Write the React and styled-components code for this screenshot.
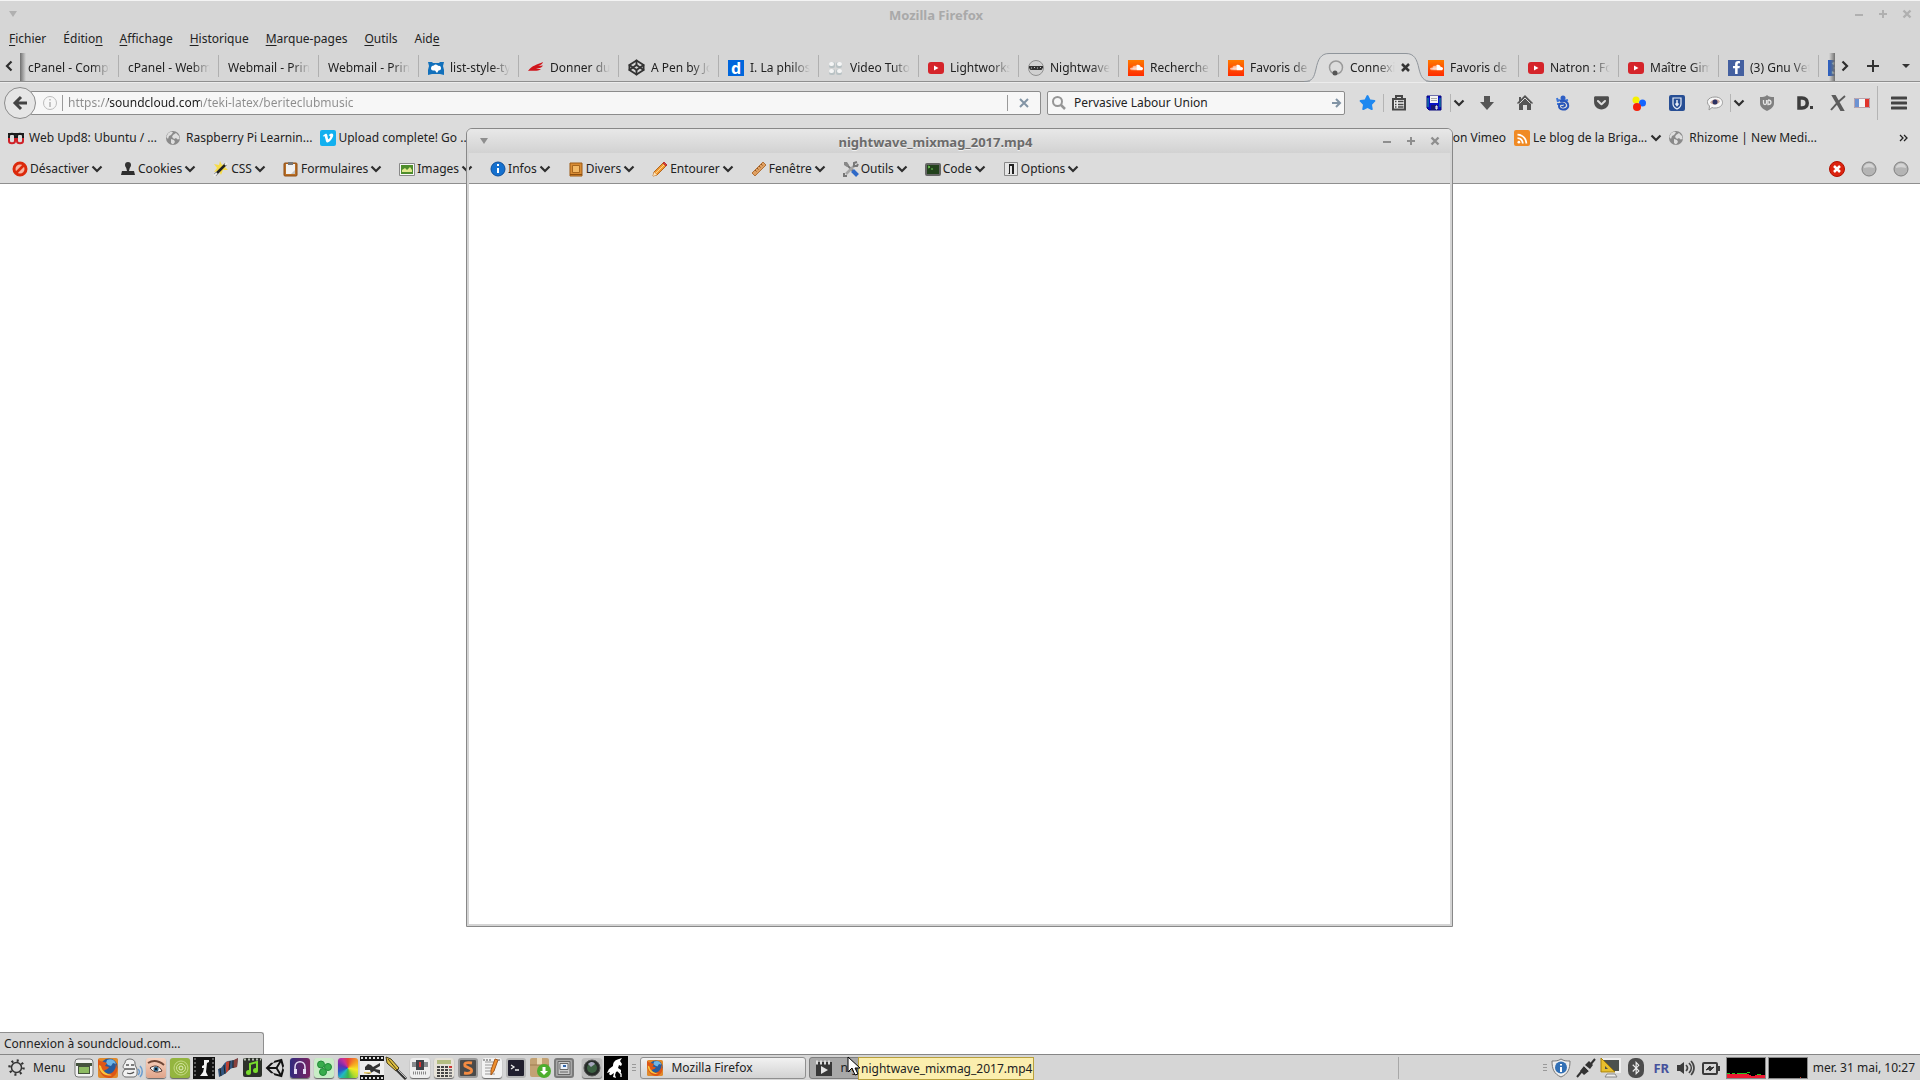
import React from "react";
import styled, { createGlobalStyle } from "styled-components";
import {
  FaBluetoothB,
  FaFacebookF,
  FaGetPocket,
  FaSoundcloud,
  FaStar,
  FaUnity,
  FaVimeoV,
} from "react-icons/fa";
import { MdRssFeed } from "react-icons/md";
import { Codepen } from "lucide-react";

const GlobalStyle = createGlobalStyle`
  * {
    box-sizing: border-box;
  }

  body {
    margin: 0;
    background: #fff;
    color: #222;
    font-family: "Noto Sans", "Open Sans", sans-serif;
    font-size: 12px;
    line-height: 16px;
    overflow: hidden;
  }

  button,
  input {
    font: inherit;
    color: inherit;
    padding: 0;
    margin: 0;
    border: 0;
    background: none;
    outline: none;
    white-space: nowrap;
  }

  svg {
    display: block;
    flex: none;
  }
`;

/* ---------- layout ---------- */

const Desktop = styled.div`
  display: flex;
  flex-direction: column;
  height: 100vh;
  min-width: 1200px;
  overflow: hidden;
`;

const Chrome = styled.header`
  background: #d6d6d6;
  border-top: 1px solid #f4f4f4;
`;

const TitleBar = styled.div`
  display: flex;
  align-items: center;
  height: ${(p) => (p.$floating ? "24px" : "26px")};
  padding: ${(p) => (p.$floating ? "0 5px 0 5px" : "0 1px 0 1px")};
  color: ${(p) => (p.$floating ? "#6b6b6b" : "#a9a9a9")};
  background: ${(p) => (p.$floating ? "linear-gradient(#e8e8e8, #d2d2d2)" : "none")};
  border-radius: 5px 5px 0 0;
  text-shadow: ${(p) => (p.$floating ? "0 1px 0 #f0f0f0" : "none")};
`;

const Title = styled.h1`
  flex: 1;
  margin: 0;
  padding-top: 2px;
  font-size: 13px;
  font-weight: 700;
  text-align: center;
`;

const WindowButton = styled.button`
  display: flex;
  align-items: center;
  justify-content: center;
  width: 24px;
  height: 24px;
  color: ${(p) => (p.$floating ? "#8e8e8e" : "#b0b0b0")};
`;

const MenuBar = styled.nav`
  display: flex;
  align-items: center;
  gap: 17px;
  height: 24px;
  padding-left: 9px;

  u {
    text-underline-offset: 2px;
  }
`;

const TabBar = styled.div`
  display: flex;
  height: 31px;
  border-bottom: 1px solid #8f8f8f;
`;

const TabScroll = styled.button`
  display: flex;
  align-items: center;
  justify-content: center;
  width: ${(p) => p.$width}px;
`;

const TabStrip = styled.div`
  display: flex;
  flex: 1;
  min-width: 0;
  height: 31px;
  position: relative;
  overflow: hidden;

  &::before,
  &::after {
    content: "";
    position: absolute;
    z-index: 1;
    top: 2px;
    bottom: 1px;
    left: 2px;
    width: 6px;
    background: linear-gradient(90deg, #707070, transparent);
  }

  &::after {
    left: auto;
    right: 0;
    background: linear-gradient(270deg, #707070, transparent);
  }
`;

const TabButton = styled.button`
  display: flex;
  align-items: center;
  gap: 6px;
  flex: none;
  width: 100px;
  height: 31px;
  padding: 2px 8px 0 10px;
  position: relative;
  text-align: left;

  &::after {
    content: "";
    display: ${(p) => (p.$plain ? "none" : "block")};
    position: absolute;
    right: -1px;
    top: 4px;
    width: 1px;
    height: 22px;
    background: #b0b0b0;
  }
`;

const TabIcon = styled.span`
  flex: none;
  position: relative;
`;

const TabLabel = styled.span`
  flex: 1;
  min-width: 0;
  overflow: hidden;
  position: relative;
  mask-image: linear-gradient(90deg, #000 calc(100% - 18px), transparent);
`;

const TabShape = styled.svg`
  position: absolute;
  left: -14px;
  top: 0;
`;

const NavBar = styled.div`
  display: flex;
  align-items: center;
  height: 40px;
  padding-left: 4px;
  background: #dcdcdc;
  border-top: 1px solid #ececec;
`;

const BackButton = styled.button`
  display: flex;
  align-items: center;
  justify-content: center;
  flex: none;
  width: 32px;
  height: 32px;
  border: 1px solid #8c8c8c;
  border-radius: 50%;
  background: #e6e6e6;
  position: relative;
  z-index: 1;
`;

const Field = styled.label`
  display: flex;
  align-items: center;
  flex: ${(p) => (p.$search ? "none" : "1")};
  width: ${(p) => (p.$search ? "298px" : "auto")};
  height: 24px;
  margin-left: ${(p) => (p.$search ? "6px" : "-6px")};
  padding: ${(p) => (p.$search ? "0 2px 0 4px" : "0 0 0 12px")};
  border: 1px solid #8c8c8c;
  border-radius: 2px;
  background: #f7f7f7;
`;

const FieldInput = styled.input`
  flex: 1;
  min-width: 0;
  margin-left: 8px;
`;

// grey scheme and path, dark domain
const UrlInput = styled(FieldInput)`
  margin-left: 5px;
  background: linear-gradient(90deg, #8c8c8c 40px, #1c1c1c 40px, #1c1c1c 132px, #8c8c8c 132px);
  background-clip: text;
  -webkit-text-fill-color: transparent;
`;

const Divider = styled.i`
  flex: none;
  width: 1px;
  height: ${(p) => p.$height || 16}px;
  margin-left: ${(p) => p.$before || 0}px;
  background: ${(p) => p.$color || "#9a9a9a"};
`;

const FieldButton = styled.button`
  display: flex;
  align-items: center;
  justify-content: center;
  width: ${(p) => p.$width || 16}px;
  height: 20px;
`;

const ToolButton = styled.button`
  display: flex;
  align-items: center;
  justify-content: center;
  flex: none;
  width: ${(p) => p.$width || 38}px;
  height: ${(p) => (p.$tall ? 34 : 18)}px;
  margin-left: ${(p) => p.$before || 0}px;
  border-left: ${(p) => (p.$split ? "1px solid #b4b4b4" : "0")};
`;

const BookmarkBar = styled.div`
  display: flex;
  align-items: center;
  height: 32px;
  padding: 0 11px 0 8px;
  background: #dcdcdc;
`;

const Bookmark = styled.a`
  display: flex;
  align-items: center;
  gap: ${(p) => p.$gap || 5}px;
  margin-right: ${(p) => p.$after || 8}px;
  color: inherit;
  text-decoration: none;
  white-space: nowrap;
`;

const Spacer = styled.div`
  flex: 1;
`;

const DevBar = styled.div`
  display: flex;
  align-items: center;
  gap: 17px;
  height: 30px;
  padding: 0 11px 0 12px;
  background: #dcdcdc;
  border-bottom: 1px solid #8f8f8f;
`;

const DevButton = styled.button`
  display: flex;
  align-items: center;
  gap: 2px;
`;

const Indicators = styled.div`
  display: flex;
  gap: 16px;
`;

const Page = styled.main`
  display: flex;
  flex: 1;
  flex-direction: column;
  justify-content: flex-end;
  background: #fff;
`;

const Status = styled.div`
  width: 264px;
  height: 22px;
  padding: 3px 4px;
  background: #d6d6d6;
  border: 1px solid #8f8f8f;
  border-left: 0;
  border-bottom: 0;
  border-radius: 0 3px 0 0;
`;

const FloatingWindow = styled.section`
  display: flex;
  flex-direction: column;
  position: absolute;
  left: 466px;
  top: 128px;
  width: 987px;
  height: 799px;
  border: 1px solid #888;
  border-radius: 6px 6px 0 0;
`;

// the frame has no painted content, so the browser shows through it
const WindowBody = styled.div`
  flex: 1;
  border: 2px solid #d4d4d4;
  border-top: 0;
`;

const Panel = styled.footer`
  display: flex;
  align-items: center;
  height: 26px;
  padding-right: 5px;
  background: #d6d6d6;
  border-top: 1px solid #868686;
`;

const MenuButton = styled.button`
  display: flex;
  align-items: center;
  gap: 8px;
  padding-left: 8px;
  margin-right: 7px;
`;

const Launcher = styled.button`
  display: flex;
  align-items: center;
  justify-content: center;
  flex: none;
  width: 24px;
  height: 24px;
  margin-left: ${(p) => p.$before || 0}px;
`;

const GripCell = styled.span`
  display: flex;
  justify-content: center;
  width: ${(p) => p.$width}px;
`;

const Tile = styled.span`
  display: flex;
  align-items: center;
  justify-content: center;
  width: ${(p) => p.$size || 20}px;
  height: ${(p) => p.$size || 20}px;
  border-radius: ${(p) => (p.$square ? 0 : 3)}px;
  background: ${(p) => p.$bg};
  box-shadow: ${(p) => (p.$square ? "none" : "0 1px 1px #666")};
  color: #fff;
`;

const Favicon = styled.span`
  display: flex;
  align-items: center;
  justify-content: center;
  flex: none;
  width: 16px;
  height: 16px;
  border-radius: ${(p) => p.$radius || 0}px;
  background: ${(p) => p.$bg};
  color: #fff;
  font-weight: 700;
  font-size: 16px;
  line-height: 16px;
`;

const TaskButton = styled.button`
  display: flex;
  align-items: center;
  gap: 8px;
  width: 166px;
  height: 22px;
  margin-right: 3px;
  padding-left: 6px;
  overflow: hidden;
  border: 1px solid ${(p) => (p.$pressed ? "#7e7e7e" : "#8f8f8f")};
  border-radius: 3px;
  background: ${(p) => (p.$pressed ? "#a8a8a8" : "linear-gradient(#f2f2f2, #d2d2d2)")};
`;

const Tooltip = styled.div`
  position: absolute;
  left: 858px;
  bottom: 0;
  height: 23px;
  padding: 3px 1px 2px 2px;
  border: 1px solid #b9a03c;
  background: #fbeeae;
  white-space: nowrap;
`;

const Pointer = styled.svg`
  position: absolute;
  left: 847px;
  bottom: 4px;
`;

const TraySpace = styled.div`
  width: 142px;
`;

const TrayItem = styled.button`
  display: flex;
  align-items: center;
  justify-content: center;
  flex: none;
  width: 25px;
  height: 24px;
  color: #46529c;
  font-size: 13px;
  font-weight: 700;
`;

const Graph = styled.svg`
  margin-left: 2px;
  border: 1px solid #8a8a8a;
  background: #000;
`;

const Clock = styled.time`
  margin-left: 5px;
  white-space: nowrap;
`;

/* ---------- small glyphs ---------- */

const Svg = ({ w = 16, h, box, children }) => (
  <svg width={w} height={h || w} viewBox={box || `0 0 ${w} ${h || w}`} fill="none">
    {children}
  </svg>
);

const Chevron = ({ dir = "down" }) => {
  const turn = { down: 0, left: 90, right: -90 }[dir];
  return (
    <Svg w={12}>
      <path d="M1.500 3.500L6 8l4.500-4.500" stroke="#2e2e2e" strokeWidth="2.200" transform={`rotate(${turn} 6 6)`} />
    </Svg>
  );
};

const Grip = () => (
  <Svg w={6} h={10}>
    <path d="M1 1.500h4M1 4.500h4M1 7.500h4" stroke="#999" />
  </Svg>
);

const Globe = () => (
  <Svg>
    <circle cx="8" cy="8" r="7" fill="#8a8a8a" />
    <path d="M3 3.500c2-2 4-2 5-1L6 5 4 6 3 9 1.300 7zM8 5l3-2 3 3 .6 3-2 .5L11 8 9 9 7 7zM6 9l3 1 1 2-2 2.500-2-1.500z" fill="#dedede" />
  </Svg>
);

const Controls = ({ floating }) => (
  <>
    <WindowButton $floating={floating} aria-label="Réduire">
      <Svg w={10}><path d="M1 6h8" stroke="currentColor" strokeWidth="2" /></Svg>
    </WindowButton>
    <WindowButton $floating={floating} aria-label="Agrandir">
      <Svg w={10}><path d="M1 5h8M5 1v8" stroke="currentColor" strokeWidth="2" /></Svg>
    </WindowButton>
    <WindowButton $floating={floating} aria-label="Fermer">
      <Svg w={10}><path d="M1.500 1.500l7 7M8.500 1.500l-7 7" stroke="currentColor" strokeWidth="2.400" /></Svg>
    </WindowButton>
  </>
);

const WindowTitle = ({ floating, children }) => (
  <TitleBar $floating={floating}>
    <WindowButton $floating={floating} aria-label="Menu de la fenêtre">
      <Svg w={10}><path d="M1 2h8L5 8z" fill="currentColor" /></Svg>
    </WindowButton>
    <Title>{children}</Title>
    <Controls floating={floating} />
  </TitleBar>
);

/* ---------- favicons ---------- */

const Sound = () => (
  <Favicon $bg="linear-gradient(#ff7a00, #ff2a00)"><FaSoundcloud size={13} /></Favicon>
);

const Youtube = () => (
  <Svg>
    <rect y="2" width="16" height="12" rx="3" fill="#d5242a" />
    <path d="M6 5.500v5L10.500 8z" fill="#fff" />
  </Svg>
);

const DocBook = () => (
  <Svg>
    <path d="M0 2h4l1 1h6l1-1h4l-1 4 1 4v5l-4-1H4l-4 1v-5l1-4z" fill="#1270bb" />
    <path d="M3 8.500c0-2 1-3 3-3 1-2 4-1 4 .5 2-.5 3 .5 3 2.500 0 1-1 2-2.500 2L9 13l-2-2.500H5c-1 0-2-1-2-2z" fill="#fff" />
  </Svg>
);

const Feather = () => (
  <Svg>
    <path d="M0 11C4 5 9 5 15 2c-1 3-3 3-5 4l5-.5c-2 3-5 2.500-7 3.500h5c-4 3-8 1-13 2z" fill="#d0161c" />
  </Svg>
);

const Petals = () => (
  <Svg>
    <g fill="#b9c2c4">
      <rect x="1" y="2" width="6" height="6" rx="2" />
      <rect x="8" y="2" width="6" height="6" rx="2" />
      <rect x="1" y="9" width="6" height="6" rx="2" />
      <rect x="8" y="9" width="6" height="6" rx="2" />
    </g>
    <g fill="#f5f5f5">
      <rect x="1" y="2" width="5" height="4" rx="2" />
      <rect x="9" y="2" width="5" height="4" rx="2" />
      <rect x="1" y="9" width="5" height="4" rx="2" />
      <rect x="9" y="9" width="5" height="4" rx="2" />
    </g>
  </Svg>
);

const Nightwave = () => (
  <Svg>
    <circle cx="8" cy="8" r="7.500" fill="#d0d0d0" stroke="#909090" />
    <path d="M1 6h14v1.500l-1.500 2.500H2.500L1 8z" fill="#333" />
    <path d="M3 8h1M6 7.500h1M9 8h1M12 7.500h1" stroke="#ccc" />
  </Svg>
);

const Spinner = () => (
  <Svg>
    <circle cx="8" cy="7.500" r="6.500" stroke="#9a9a9a" strokeWidth="1.500" />
    <circle cx="7" cy="13" r="2.500" fill="#555" />
  </Svg>
);

const Upd8 = () => (
  <Svg>
    <path d="M1 8V6c0-3 6-3 6 0v2M9 8V6c0-3 6-3 6 0v2" stroke="#1b1b1b" strokeWidth="2" />
    <path d="M1 8v3c0 3 6 3 6 0V8M9 8v3c0 3 6 3 6 0V8" stroke="#cf2027" strokeWidth="2" />
    <path d="M0 4h16" stroke="#1b1b1b" strokeWidth="2" />
  </Svg>
);

const TABS = [
  { label: "cPanel - Comptes" },
  { label: "cPanel - Webmail" },
  { label: "Webmail - Principal" },
  { label: "Webmail - Principal" },
  { label: "list-style-type", icon: <DocBook /> },
  { label: "Donner du sens", icon: <Feather /> },
  { label: "A Pen by John", icon: <Codepen size={17} strokeWidth={2.600} color="#333" /> },
  { label: "I. La philosophie", icon: <Favicon $bg="#0066dc">d</Favicon> },
  { label: "Video Tutorials", icon: <Petals /> },
  { label: "Lightworks", icon: <Youtube /> },
  { label: "Nightwave", icon: <Nightwave /> },
  { label: "Recherche", icon: <Sound /> },
  { label: "Favoris de", icon: <Sound />, plain: true },
  { label: "Connexion", icon: <Spinner />, active: true },
  { label: "Favoris de", icon: <Sound /> },
  { label: "Natron : Forum", icon: <Youtube /> },
  { label: "Maître Gims", icon: <Youtube /> },
  { label: "(3) Gnu Veto", icon: <Favicon $bg="#4460a0"><FaFacebookF size={13} /></Favicon> },
  { label: "", icon: <Favicon $bg="#2d5fbf">3</Favicon> },
];

const Tab = ({ label, icon, active, plain }) => (
  <TabButton $plain={plain || active}>
    {active && (
      <TabShape width="128" height="31" viewBox="0 0 128 31">
        <path
          d="M0 30.500C9 30.500 10 26 12 18 14 8 17 2.500 25 2.500H102C110 2.500 113 8 115 18 117 26 119 30.500 128 30.500V31H0z"
          fill="#dcdcdc"
          stroke="#8f959b"
        />
        <path d="M6 31h116" stroke="#dcdcdc" strokeWidth="2" />
      </TabShape>
    )}
    {icon && <TabIcon>{icon}</TabIcon>}
    <TabLabel>{label}</TabLabel>
    {active && (
      <TabIcon>
        <Svg w={9}><path d="M1 1l7 7M8 1L1 8" stroke="#333" strokeWidth="2.500" /></Svg>
      </TabIcon>
    )}
  </TabButton>
);

/* ---------- toolbar drawings ---------- */

const TOOLS = [
  { name: "Favori", width: 32, before: 6, icon: <FaStar size={17} color="#1e88f0" /> },
  {
    name: "Marque-pages", width: 30, split: true,
    icon: (
      <Svg>
        <path d="M5 3V1h6v2" stroke="#474747" strokeWidth="2" />
        <path d="M2 4h12v10.500H2z" fill="#ececec" stroke="#474747" strokeWidth="2" />
        <path d="M4 6.500h1.500M7 6.500h5.500M4 9.500h1.500M7 9.500h5.500M4 12h1.500M7 12h5.500" stroke="#474747" strokeWidth="1.400" />
      </Svg>
    ),
  },
  {
    name: "Enregistrer", width: 32, before: 5,
    icon: (
      <Svg>
        <path d="M1 1h14v14H3l-2-2z" fill="#0a12c4" stroke="#06067c" />
        <path d="M4 1h8v7H4z" fill="#f4f4f4" />
        <path d="M5 3.500h6M5 5.500h6" stroke="#aaa" />
        <path d="M2 3v9M14 3v9" stroke="#16a394" />
        <path d="M5 10h7v5H5z" fill="#191970" />
        <path d="M10 11h1v3h-1z" stroke="#fff" />
      </Svg>
    ),
  },
  { name: "Plus", width: 16, split: true, icon: <Chevron /> },
  { name: "Téléchargements", before: 2, icon: <Svg><path d="M5 1h6v6h4l-7 8-7-8h4z" fill="#555" /></Svg> },
  {
    name: "Accueil",
    icon: <Svg><path d="M8 0l8 8-1 1-1-1v7h-4v-5H6v5H2V8L1 9 0 8l2-2V2h2v2z" fill="#555" /><path d="M2.500 8.500L8 3l5.500 5.500" stroke="#dcdcdc" /></Svg>,
  },
  {
    name: "Gecko",
    icon: (
      <Svg>
        <circle cx="8" cy="3" r="2.500" fill="#2f5fc4" />
        <path d="M3 5l5 1 5-1M8 9H2M2 3l1 4" stroke="#3e76d8" strokeWidth="2" />
        <path d="M5 6c6-1 9 2 8 6-2 4-9 3-9-1 0-3 5-4 6-1 0 2-3 2-3 1" stroke="#2855b8" strokeWidth="2" />
      </Svg>
    ),
  },
  { name: "Pocket", icon: <FaGetPocket size={17} color="#4d4d4d" /> },
  {
    name: "Couleurs",
    icon: <Svg><circle cx="5" cy="5" r="3.500" fill="#f6f000" /><circle cx="11.500" cy="8" r="3.500" fill="#1565ff" /><circle cx="6" cy="12" r="4" fill="#f5200a" /></Svg>,
  },
  {
    name: "Protection",
    icon: (
      <Svg>
        <rect width="16" height="16" rx="2" fill="#274e94" />
        <path d="M4 3h8v6c0 2-2 4-4 5-2-1-4-3-4-5z" stroke="#e8eef8" strokeWidth="1.200" />
        <path d="M8 5v5M6.500 8.500L8 10.500l1.500-2" stroke="#e8eef8" strokeWidth="1.500" />
      </Svg>
    ),
  },
  {
    name: "Suivi", width: 30, before: 4,
    icon: (
      <Svg>
        <path d="M8 2c10 0 10 11 0 11-1 0-2 0-3-.5L2 15l.5-4C-2 7 1 2 8 2z" fill="#f6f6f6" stroke="#999" />
        <path d="M3 7.500c3-4 8-4 10-1-3 4-7 4-10 1z" fill="#c9a79c" />
        <circle cx="8" cy="7" r="2.500" fill="#2c3263" />
      </Svg>
    ),
  },
  { name: "Plus", width: 16, split: true, icon: <Chevron /> },
  {
    name: "uBlock", before: 2,
    icon: <Svg><path d="M8 0c2 2 4 2 7 2v6c0 4-3 6-7 8-4-2-7-4-7-8V2c3 0 5 0 7-2z" fill="#808080" /><path d="M4.500 5v3c0 2 3 2 3 0V5M9 5v4.500c4 0 4-4.500 0-4.500" stroke="#e4e4e4" strokeWidth="1.300" /></Svg>,
  },
  {
    name: "Disconnect",
    icon: <Svg><path d="M2 3h3c7 0 7 10 0 10H2z" stroke="#3d3d3d" strokeWidth="3.500" /><path d="M13 11h3v3h-3z" fill="#3d3d3d" /></Svg>,
  },
  {
    name: "Xmarks", width: 24, before: 2,
    icon: <Svg><path d="M3 1h2l8 14h-2zM15 1C10 5 5 10 1 15" stroke="#5c5c5c" strokeWidth="2" /></Svg>,
  },
  {
    name: "Langue", width: 24,
    icon: <Svg><path d="M0 3h5v10H0z" fill="#6c92d2" /><path d="M5 3h6v10H5z" fill="#f4f4f4" /><path d="M11 3h5v10h-5z" fill="#e0342c" /><path d="M.5 3.500h15v9H.5z" stroke="#b9a4ae" /></Svg>,
  },
  {
    name: "Menu", width: 43, before: 3, split: true, tall: true,
    icon: <Svg><path d="M1 3h14M1 8h14M1 13h14" stroke="#444" strokeWidth="3" strokeLinecap="round" /></Svg>,
  },
];

const DEV_ITEMS = [
  {
    label: "Désactiver",
    icon: <Svg><circle cx="8" cy="8" r="6" fill="#f7b7a5" stroke="#dc2a0c" strokeWidth="3" /><path d="M4 12l8-8" stroke="#dc2a0c" strokeWidth="2.500" /></Svg>,
  },
  {
    label: "Cookies",
    icon: <Svg><circle cx="8" cy="4" r="3" fill="#333" /><path d="M6 6h4l-1 4h5l1 4H1l1-4h5z" fill="#2e2e2e" /></Svg>,
  },
  {
    label: "CSS",
    icon: (
      <Svg>
        <path d="M7 0l2 4 5-2-2 4 3 3-5 0-2 5-2-4-5 1 3-4-3-4 5 1z" fill="#f7dc4a" />
        <path d="M2 14L13 3" stroke="#222" strokeWidth="2.500" />
        <path d="M1 15l3-3M12 4l2-2" stroke="#eee" strokeWidth="2" />
      </Svg>
    ),
  },
  {
    label: "Formulaires",
    icon: <Svg><rect x="1" y="2" width="13" height="13" rx="1" fill="#b86f26" stroke="#8f4d12" /><path d="M3 3h9v10H3z" fill="#f1f1f1" /><path d="M5 1h5v3H5z" fill="#777" /><path d="M12 13H8l4-4z" fill="#c4c4c4" /></Svg>,
  },
  {
    label: "Images",
    icon: <Svg><path d="M.5 2.500h15v12H.5z" fill="#f8f8f8" stroke="#888" /><path d="M2 4h12v9H2z" fill="#4f8d2c" /><path d="M3 9l3-2 2 2 3-3 2 3v2H3z" fill="#dfe88d" /></Svg>,
  },
  {
    label: "Infos",
    icon: <Svg><circle cx="8" cy="8" r="7" fill="#1571cf" stroke="#0d4f9c" /><path d="M8 3v2M8 7v5" stroke="#fff" strokeWidth="2" /></Svg>,
  },
  {
    label: "Divers",
    icon: <Svg><path d="M2 2h12v13H2z" fill="#d98c34" stroke="#9c5a14" /><path d="M4.500 4.500h7v7h-7z" fill="#f2b865" stroke="#a8661d" /><path d="M2 13.500h12" stroke="#8d4f10" /></Svg>,
  },
  {
    label: "Entourer",
    icon: <Svg><path d="M1 15l1-4L12 1l3 3L5 14z" fill="#f09a34" stroke="#b3641a" /><path d="M11 2l3 3 1-1-3-3z" fill="#dd4444" stroke="#b33" /><path d="M1 15l1-4 3 3z" fill="#fce4be" /><path d="M4 12l8-8" stroke="#ffd58a" /></Svg>,
  },
  {
    label: "Fenêtre",
    icon: <Svg><path d="M1 12L12 1l3 3L4 15z" fill="#dfa062" stroke="#b0713a" /><path d="M6 7l1.500 1.500M8 5l1.500 1.500M10 3l1.500 1.500M4 9l1.500 1.500" stroke="#8f5420" /></Svg>,
  },
  {
    label: "Outils",
    icon: (
      <Svg>
        <path d="M3 3l8 8" stroke="#777" strokeWidth="2" />
        <path d="M1 1l3 0 2 3-2 2-3-2z" fill="#888" />
        <path d="M9.500 9.500l5 5" stroke="#2f6ac8" strokeWidth="4" />
        <path d="M3 13l8-8" stroke="#a5a5a5" strokeWidth="2.500" />
        <path d="M14 1l-3 1v3l3 0 1-2M1 12v3h3" stroke="#777" strokeWidth="2" />
      </Svg>
    ),
  },
  {
    label: "Code",
    icon: <Svg><rect x="1" y="3" width="14" height="11" rx="1" fill="#23421d" stroke="#666" strokeWidth="2" /><path d="M3 5l2 1-2 1M6 8h2" stroke="#72d35a" /></Svg>,
  },
  {
    label: "Options",
    icon: <Svg><path d="M1.500 1.500h13v13h-13z" fill="#e6e6e6" stroke="#888" /><path d="M5 13h2V5h2v8h2V3H6v9z" fill="#222" /></Svg>,
  },
];

const Ball = ({ red }) => (
  <Svg>
    <circle cx="8" cy="8" r={red ? 7.5 : 7} fill={red ? "#dc230f" : "#b4b4b4"} stroke={red ? "#b01000" : "#808080"} />
    {red
      ? <path d="M5 5l6 6M11 5l-6 6" stroke="#fff" strokeWidth="2.500" />
      : <path d="M3 7c0-6 10-6 10 0-3-1-7-1-10 0z" fill="#d4d4d4" />}
  </Svg>
);

/* ---------- launchers ---------- */

const FirefoxLogo = ({ size = 20 }) => (
  <Svg w={size} box="0 0 20 20">
    <rect width="20" height="20" rx="2" fill="#e08a2c" />
    <circle cx="11" cy="9" r="8.500" fill="#265c9e" />
    <path d="M9 2c4-2 8 0 9 4l-3-1-2 3-3-1-2-2z" fill="#6fb6e6" />
    <path d="M0 1c2 3 4 2 6 3l3 1-2 3 4 1c-1 3-4 2-5 4 2 4 8 4 11-2 1-2 1-4 0-6 4 5 3 12-4 15C4 21-1 12 0 1z" fill="#dd5716" />
    <path d="M1 7c0 8 7 12 13 10-6-1-10-4-11-9z" fill="#fac63f" />
  </Svg>
);

const LAUNCHERS = [
  {
    name: "Bureau",
    icon: <Svg w={20}><rect x="1" y="1" width="18" height="18" rx="3" fill="#f2f2f2" stroke="#777" /><path d="M2 5h16v3H2zM4 8h12v8H4z" fill="#45533e" /><path d="M5 9h10v6H5z" fill="#8dbb62" /></Svg>,
  },
  { name: "Firefox", icon: <FirefoxLogo /> },
  {
    name: "Messagerie",
    icon: (
      <Svg w={22}>
        <path d="M4 6c0-3 2-4 5-4s5 2 5 4v2l2 4c0 4 1 7-3 8H5c-3 0-4-3-3-5l2-3c-3-1-2-4 0-6z" fill="#f2f2f2" stroke="#6a6a6a" />
        <path d="M5 8h3M10 8h3M4 12h10M6 16c3 1 5 1 7-1" stroke="#555" strokeWidth="1.300" />
        <path d="M17 12c2 2 2 4 0 6M19 9c3 3 3 8 0 11" stroke="#6b9ccf" strokeWidth="1.500" />
      </Svg>
    ),
  },
  {
    name: "Œil",
    icon: (
      <Tile $bg="linear-gradient(#f9d3bf, #dfa48a)">
        <Svg w={18}><path d="M1 4c5-3 11-2 16 2" stroke="#6f4635" strokeWidth="2" /><path d="M3 9c4-3 9-3 12 3-5 2-9 1-12-3z" fill="#f6f6f6" stroke="#4a3028" /><circle cx="9" cy="10" r="2.500" fill="#33688c" /><circle cx="9" cy="10" r="1" fill="#000" /></Svg>
      </Tile>
    ),
  },
  {
    name: "Spirale",
    icon: (
      <Tile $bg="#94b53f">
        <Svg w={18}><circle cx="10" cy="9" r="7" stroke="#c6da86" /><circle cx="10" cy="9" r="4.500" stroke="#d3e49c" /><circle cx="10" cy="9" r="2" stroke="#e4efbe" /></Svg>
      </Tile>
    ),
  },
  {
    name: "Film",
    icon: (
      <Svg w={22}>
        <path d="M0 0h22v22H0z" fill="#111" />
        <path d="M2 1v20M20 1v20" stroke="#aaa" strokeDasharray="2 2" />
        <path d="M11 3h5v2l-2 1-1 9 2 4H7l3-4 1-4H9V9l2-1z" fill="#f4f4f4" />
      </Svg>
    ),
  },
  {
    name: "Montage",
    icon: (
      <Svg w={22}>
        <path d="M1 12c5 0 5-7 10-8s6 0 10-3l-1 9c-5 1-6 1-9 4s-5 4-9 6z" fill="#33557f" />
        <path d="M9 5l4-1-1 9-3 3z" fill="#bd4031" />
        <path d="M17 3l4-2-1 9-4 1z" fill="#87403c" />
        <path d="M3 11l1 8M7 8l1 9M13 4l-1 9M16 3v8" stroke="#222" />
      </Svg>
    ),
  },
  {
    name: "Musique",
    icon: <Svg w={21}><rect x="1" y="1" width="19" height="19" rx="2" fill="#2d322b" /><path d="M2 2.500h17" stroke="#b5bdb0" strokeWidth="2" strokeDasharray="2 2" /><path d="M8 15V7l7-2v8" stroke="#79dd2e" strokeWidth="2" /><circle cx="6.500" cy="15.500" r="2.500" fill="#79dd2e" /><circle cx="13.500" cy="13.500" r="2.500" fill="#79dd2e" /></Svg>,
  },
  { name: "Unity", icon: <FaUnity size={22} color="#111" /> },
  {
    name: "Ardour",
    icon: <Tile $bg="linear-gradient(90deg, #312b7e, #7a2360)"><Svg w={18}><path d="M4 12V8c0-7 10-7 10 0v4" stroke="#e5ddf5" strokeWidth="1.500" /><path d="M3 10h3v5H3zM12 10h3v5h-3z" fill="#e5ddf5" /></Svg></Tile>,
  },
  {
    name: "Trèfle",
    icon: <Tile $bg="#c9ecc6"><Svg w={18}><g fill="#39ac4c" stroke="#218a38"><circle cx="6" cy="5.500" r="3.500" /><circle cx="13" cy="8" r="3.500" /><circle cx="8" cy="13" r="3.500" /></g></Svg></Tile>,
  },
  {
    name: "Couleurs",
    icon: <Tile $bg="conic-gradient(#e8403a, #f59a22 50deg, #f6e927 100deg, #b5dc2e 140deg, #38b54a 180deg, #22b8c4 220deg, #2a56c6 250deg, #6a2cb0 290deg, #c9309a 330deg, #e8403a)" />,
  },
  {
    name: "Synfig",
    icon: (
      <Svg w={24}>
        <path d="M0 0h24v24H0z" fill="#161616" /><path d="M0 5h24v14H0z" fill="#eee" />
        <path d="M1 2h22M1 22h22" stroke="#ddd" strokeWidth="2" strokeDasharray="2 2" />
        <path d="M5 11l3-3 3 1 2 2 7-4v3l-5 3 5 1v4l-6-3-5 3-4-1z" fill="#333" /><path d="M5 14h5l1 3H5z" fill="#f5f5f5" /><path d="M4 16h7v1.500H4z" fill="#e5c867" />
      </Svg>
    ),
  },
  {
    name: "Plume",
    icon: <Svg w={24}><path d="M2 1l5 2 8 9-3 3L3 7z" fill="#e0c141" stroke="#44391a" /><path d="M13 14l9 9" stroke="#333" strokeWidth="3" /><path d="M14 14l8 8" stroke="#bbb" /><path d="M4 3l9 11" stroke="#473b12" /></Svg>,
  },
  {
    name: "Mixer",
    icon: <Tile $bg="#eeeeee"><Svg w={20}><path d="M2 4h16v5H2z" fill="#8a8d90" /><path d="M6 2h8v10H6z" fill="#40444a" /><path d="M10 4v5" stroke="#d33" strokeWidth="2" /><path d="M3 15h14" stroke="#888" strokeWidth="3" strokeDasharray="1 1" /></Svg></Tile>,
  },
  {
    name: "Calculatrice",
    icon: <Tile $bg="#e6e2d8"><Svg w={18}><path d="M2 1h14v4H2z" fill="#b2bc80" /><path d="M2 8h11M2 11h11M2 14h11M2 17h11" stroke="#444" strokeWidth="2" strokeDasharray="3 1" /><path d="M14 8h3" stroke="#c33" strokeWidth="2" /><path d="M14 11h3M14 14h3M14 17h3" stroke="#777" strokeWidth="2" /></Svg></Tile>,
  },
  {
    name: "Sublime",
    icon: <Svg w={20}><rect x="1" y="1" width="18" height="18" rx="2" fill="#4a4a4a" stroke="#999" strokeWidth="2" /><path d="M14 5C8 4 6 5 7 8l6 3c2 3-1 5-7 4" stroke="#f38b42" strokeWidth="2.800" /></Svg>,
  },
  {
    name: "Éditeur",
    icon: <Tile $bg="#f2f2f2"><Svg w={20}><path d="M3 4h10M3 7h9M3 10h10M3 13h8M3 16h10" stroke="#999" /><path d="M13 1L9 12l0 5 3-4 4-11z" fill="#ef8f2d" stroke="#a4571b" /><path d="M2 1v2M5 1v2M8 1v2M17 1v2" stroke="#555" /></Svg></Tile>,
  },
  {
    name: "Terminal",
    icon: <Svg w={20}><rect x="1" y="1" width="18" height="18" rx="2" fill="#211f2e" stroke="#b5b5b5" strokeWidth="2" /><path d="M5 7l3 2-3 2M9 12h4" stroke="#eee" strokeWidth="1.300" /></Svg>,
  },
  {
    name: "Paquets",
    icon: <Svg w={22}><rect x="1" y="1" width="19" height="19" rx="2" fill="#c3a274" /><path d="M8 1h5v7H8z" fill="#ead8b5" /><path d="M1 8h19" stroke="#9e7c50" /><circle cx="15" cy="14" r="7" fill="#4cae2e" /><path d="M13.500 10h3v4h2.500l-4 4-4-4h2.500z" fill="#fff" /></Svg>,
  },
  {
    name: "Disque",
    icon: <Svg w={20}><rect x="1" y="1" width="18" height="18" rx="2" fill="#a8a8a8" stroke="#7a7a7a" strokeWidth="2" /><path d="M4 3.500h12v13H4z" fill="#c8c8c8" stroke="#666" /><path d="M6 5.500h8v6H6z" fill="#e9f0fa" stroke="#666" /><path d="M9 8h3" stroke="#36a" strokeWidth="2" /><path d="M6 14h8" stroke="#666" /></Svg>,
  },
  {
    name: "Caméra", before: 4,
    icon: <Tile $bg="#bdbdbd"><Svg w={20}><circle cx="10" cy="10" r="8" fill="#272c29" stroke="#555" /><circle cx="10" cy="10" r="5" fill="#3c6042" /><path d="M6 6c3-3 6-2 7 0l-4 3z" fill="#a5a6bb" /></Svg></Tile>,
  },
  {
    name: "Licorne",
    icon: (
      <Tile $bg="#000" $square $size={24}>
        <Svg w={24}>
          <path d="M18 2l-2 3 2 3-1 2-2-1-1 3 3 2 0 3-3-2-2 1-1 3 1 3-3-1 1-4-3 2-2-1 1-2-3 1 2-4 4-3c0-4 2-6 6-7z" fill="#fff" />
          <path d="M13 14l4 4 0 3M9 14l-3 5" stroke="#fff" strokeWidth="1.300" />
        </Svg>
      </Tile>
    ),
  },
];

const Clapper = () => (
  <Svg>
    <path d="M0 2h16v14H0z" fill="#383838" />
    <path d="M0 1.500h16M0 3.500h16" stroke="#ddd" strokeWidth="2" strokeDasharray="2 2" />
    <path d="M5 6v8l7-4z" fill="#e4e4e4" />
  </Svg>
);

const MENUS = [
  ["", "F", "ichier"],
  ["Éditio", "n", ""],
  ["", "A", "ffichage"],
  ["", "H", "istorique"],
  ["", "M", "arque-pages"],
  ["", "O", "utils"],
  ["Aid", "e", ""],
];

const Tray = () => (
  <>
    <GripCell $width={8}><Grip /></GripCell>
    <TrayItem aria-label="Mises à jour">
      <Svg w={20}><path d="M10 1c3 2 5 2 9 2 0 8-2 13-9 16C3 16 1 11 1 3c4 0 6 0 9-2z" fill="#eee" stroke="#777" /><circle cx="10" cy="9.500" r="6" fill="#3270b5" /><path d="M10 6v1.500M10 9v5" stroke="#fff" strokeWidth="2" /></Svg>
    </TrayItem>
    <TrayItem aria-label="Réseau">
      <Svg w={20}><path d="M1 19l5-6M14 7l5-6" stroke="#333" strokeWidth="2" /><path d="M4 13l4-5 5 5-5 4zM9 7l4-4 4 4-3 4z" fill="#333" /><path d="M8 8l5 5" stroke="#bbb" /></Svg>
    </TrayItem>
    <TrayItem aria-label="Écran">
      <Svg w={22}><path d="M2 2h18v13H2z" fill="#4c514d" stroke="#eee" strokeWidth="2" /><path d="M1 1v14h14z" fill="#e7bf2d" stroke="#a37e0c" /><path d="M5 9v3h3z" fill="#4c514d" /><path d="M7 17h8l2 3H5z" fill="#eee" stroke="#888" /></Svg>
    </TrayItem>
    <TrayItem aria-label="Bluetooth">
      <Svg w={16} h={22}><rect y="1" width="16" height="20" rx="7" fill="#4c4c4c" /><FaBluetoothB x="1" y="4" size={14} color="#eee" /></Svg>
    </TrayItem>
    <TrayItem>FR</TrayItem>
    <TrayItem aria-label="Volume">
      <Svg w={18}><path d="M0 6h3l4-3v12l-4-3H0z" fill="#3b3b3b" /><path d="M9 6c2 2 2 4 0 6M12 4c3 3 3 7 0 10M14 2c4 4 4 10 0 14" stroke="#444" strokeWidth="1.700" /></Svg>
    </TrayItem>
    <TrayItem aria-label="Batterie">
      <Svg w={18}><rect x="1" y="4" width="14" height="11" rx="1" stroke="#3b3b3b" strokeWidth="2" /><path d="M16 7h2v5h-2z" fill="#3b3b3b" /><path d="M4 11l4-4 1 2 3-1-4 4-1-2z" fill="#333" stroke="#333" /></Svg>
    </TrayItem>
    <Graph width="40" height="22" viewBox="0 0 38 20">
      <path d="M0 20v-4h22v1h2v1h4v-1h10v3z" fill="#ee1933" />
      <path d="M0 15.500h3M5 15.500h3M10 15.500h10M20 14.500h3M30 16.500h4" stroke="#25c422" />
    </Graph>
    <Graph width="40" height="22" viewBox="0 0 38 20">
      <path d="M31 19.500h1" stroke="#d63c28" />
    </Graph>
  </>
);

export default function App() {
  return (
    <Desktop>
      <GlobalStyle />
      <Chrome>
        <WindowTitle>Mozilla Firefox</WindowTitle>
        <MenuBar>
          {MENUS.map(([a, b, c]) => (
            <button key={a + b + c}>{a}<u>{b}</u>{c}</button>
          ))}
        </MenuBar>
        <TabBar>
          <TabScroll $width={18} aria-label="Onglets précédents"><Chevron dir="left" /></TabScroll>
          <TabStrip>
            {TABS.map((tab, i) => <Tab key={i} {...tab} />)}
          </TabStrip>
          <TabScroll $width={20} aria-label="Onglets suivants"><Chevron dir="right" /></TabScroll>
          <TabScroll $width={36} aria-label="Nouvel onglet">
            <Svg w={12}><path d="M0 6h12M6 0v12" stroke="#333" strokeWidth="2" /></Svg>
          </TabScroll>
          <TabScroll $width={29} aria-label="Lister les onglets">
            <Svg w={8}><path d="M0 2h8L4 6z" fill="#333" /></Svg>
          </TabScroll>
        </TabBar>

        <NavBar>
          <BackButton aria-label="Précédent">
            <Svg><path d="M15 8H3M9 2L3 8l6 6" stroke="#444" strokeWidth="3" /></Svg>
          </BackButton>
          <Field>
            <Svg w={14}>
              <circle cx="7" cy="7" r="6.500" stroke="#bbb" />
              <path d="M7 3v1.500M7 6v5" stroke="#b5b5b5" strokeWidth="1.500" />
            </Svg>
            <Divider $before={5} />
            <UrlInput aria-label="Adresse" defaultValue="https://soundcloud.com/teki-latex/beriteclubmusic" />
            <Divider />
            <FieldButton $width={32} aria-label="Arrêter">
              <Svg w={10}><path d="M1 1l8 8M9 1L1 9" stroke="#8294a5" strokeWidth="2" /></Svg>
            </FieldButton>
          </Field>
          <Field $search>
            <Svg w={14}><circle cx="5.500" cy="5.500" r="4.500" stroke="#969696" strokeWidth="2" /><path d="M9 9l4 4" stroke="#969696" strokeWidth="2.500" /></Svg>
            <FieldInput aria-label="Rechercher" defaultValue="Pervasive Labour Union" />
            <FieldButton $width={11} aria-label="Lancer la recherche">
              <Svg w={10}><path d="M0 5h8M4 1l4 4-4 4" stroke="#8294a5" strokeWidth="2" /></Svg>
            </FieldButton>
          </Field>
          {TOOLS.map(({ name, icon, width, before, split, tall }, i) => (
            <ToolButton key={i} $width={width} $before={before} $split={split} $tall={tall} aria-label={name}>
              {icon}
            </ToolButton>
          ))}
        </NavBar>

        <BookmarkBar>
          <Bookmark href="#"><Upd8 />Web Upd8: Ubuntu / ...</Bookmark>
          <Bookmark href="#"><Globe />Raspberry Pi Learnin...</Bookmark>
          <Bookmark href="#" $gap={2}>
            <Favicon $bg="#12b0ef" $radius={2}><FaVimeoV size={12} /></Favicon>
            Upload complete! Go ...
          </Bookmark>
          <Spacer />
          <Bookmark href="#">on Vimeo</Bookmark>
          <Bookmark href="#" $gap={3} $after={6}>
            <Favicon $bg="#f08a24" $radius={2}><MdRssFeed size={15} /></Favicon>
            Le blog de la Briga...
            <Chevron />
          </Bookmark>
          <Bookmark href="#" $after={82}><Globe />Rhizome | New Medi...</Bookmark>
          <button aria-label="Plus de marque-pages">
            <Svg w={10}><path d="M1 2l3 3-3 3M5 2l3 3-3 3" stroke="#222" strokeWidth="1.300" /></Svg>
          </button>
        </BookmarkBar>

        <DevBar>
          {DEV_ITEMS.map(({ label, icon }) => (
            <DevButton key={label}>{icon}{label}<Chevron /></DevButton>
          ))}
          <Spacer />
          <Indicators>
            <Ball red /><Ball /><Ball />
          </Indicators>
        </DevBar>
      </Chrome>

      <Page>
        <Status>Connexion à soundcloud.com...</Status>
      </Page>

      <Panel>
        <MenuButton>
          <Svg w={17}>
            <circle cx="8.500" cy="8.500" r="5" stroke="#333" strokeWidth="1.500" />
            <circle cx="8.500" cy="8.500" r="7" stroke="#333" strokeWidth="2.500" strokeDasharray="2 3.500" />
          </Svg>
          Menu
        </MenuButton>
        {LAUNCHERS.map(({ name, icon, before }) => (
          <Launcher key={name} $before={before} aria-label={name}>{icon}</Launcher>
        ))}
        <GripCell $width={12}><Grip /></GripCell>
        <TaskButton><FirefoxLogo size={16} />Mozilla Firefox</TaskButton>
        <TaskButton $pressed><Clapper />nightwave_mixmag_2017</TaskButton>
        <Spacer />
        <Divider $height={22} $color="#a8a8a8" />
        <TraySpace />
        <Tray />
        <Clock>mer. 31 mai, 10:27</Clock>
      </Panel>

      <FloatingWindow>
        <WindowTitle floating>nightwave_mixmag_2017.mp4</WindowTitle>
        <WindowBody />
      </FloatingWindow>
      <Tooltip role="tooltip">nightwave_mixmag_2017.mp4</Tooltip>
      <Pointer width="13" height="20" viewBox="0 0 13 20">
        <path d="M1 1v15l4-4 3 7 3-1-3-6h5z" fill="#fff" stroke="#000" />
      </Pointer>
    </Desktop>
  );
}
